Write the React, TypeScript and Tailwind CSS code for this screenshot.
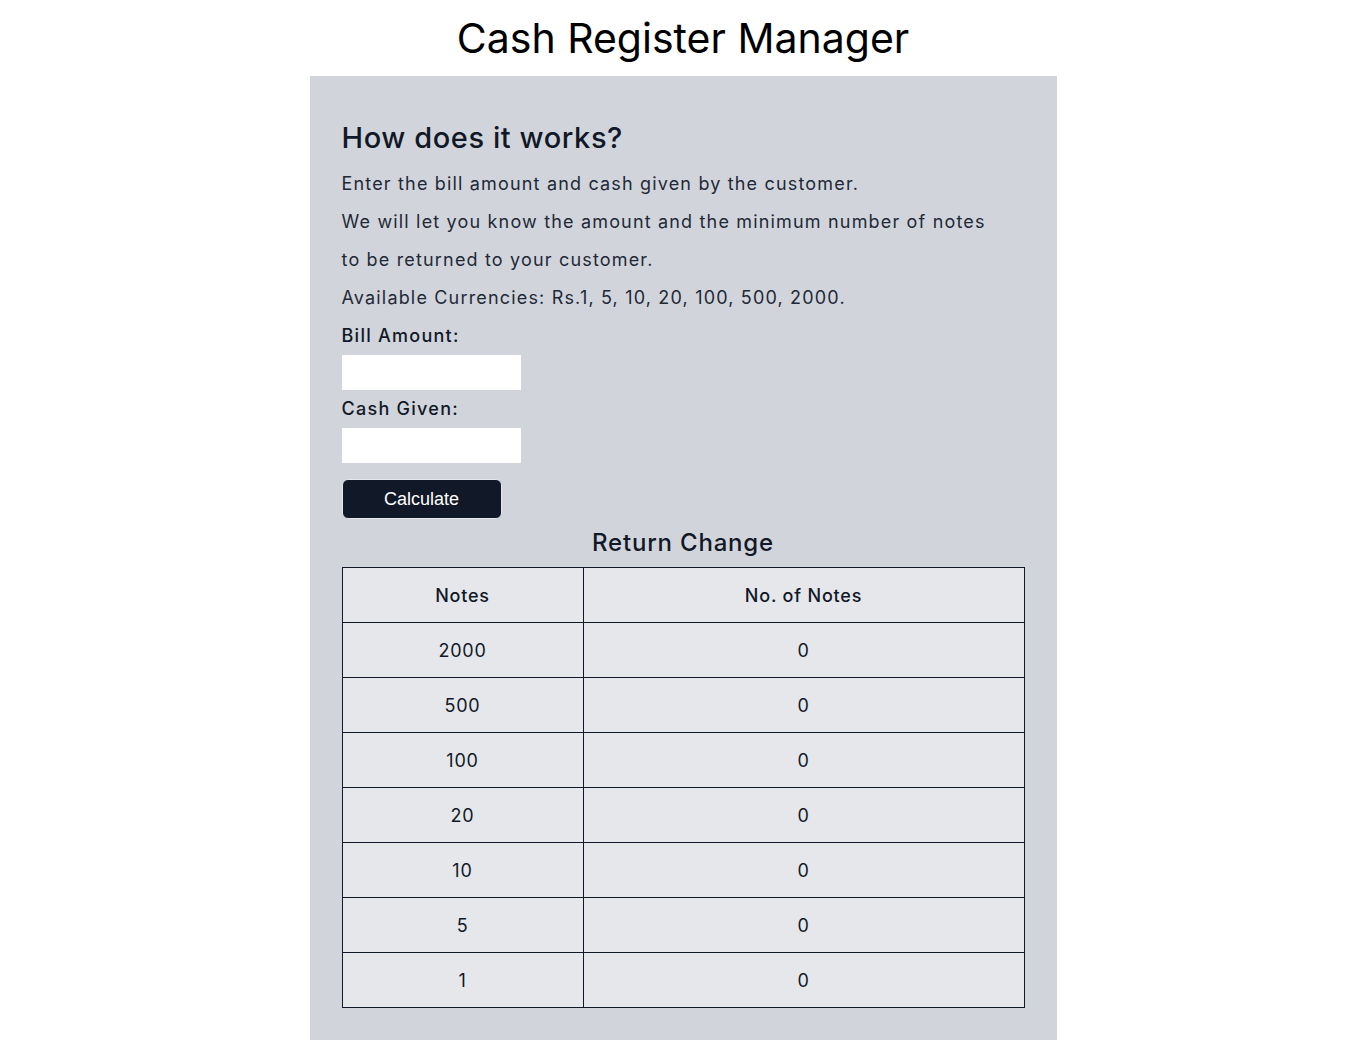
const NOTES = [2000, 500, 100, 20, 10, 5, 1];

export default function App() {
  return (
    <div className="min-h-screen bg-white text-[#111827] font-['Inter',sans-serif]">
      <h1 className="text-center text-[41px] leading-[76px] font-normal text-black">
        Cash Register Manager
      </h1>

      <main className="mx-auto w-[747px] bg-[#d1d5db] px-8 pt-[44px] pb-8 tracking-[0.05em]">
        <h2 className="text-[29px] leading-[36px] font-medium tracking-[0.02em]">How does it works?</h2>
        <div className="mt-[9px] text-[18px] leading-[38px] text-[#1f2937] tracking-[0.065em]">
          <p>Enter the bill amount and cash given by the customer.</p>
          <p>
            We will let you know the amount and the minimum number of notes
            <br />
            to be returned to your customer.
          </p>
          <p>Available Currencies: Rs.1, 5, 10, 20, 100, 500, 2000.</p>
        </div>

        <form className="flex flex-col items-start" onSubmit={(e) => e.preventDefault()}>
          <label htmlFor="bill" className="text-[18px] leading-[38px] font-medium tracking-[0.07em]">
            Bill Amount:
          </label>
          <input id="bill" type="number" className="h-[35px] w-[179px] bg-white outline-none" />
          <label htmlFor="cash" className="text-[18px] leading-[38px] font-medium tracking-[0.07em]">
            Cash Given:
          </label>
          <input id="cash" type="number" className="h-[35px] w-[179px] bg-white outline-none" />
          <button
            type="submit"
            className="mt-4 h-[40px] w-[160px] rounded-md border border-[#e5e7eb] bg-[#111827] font-['Liberation_Sans',Arial,sans-serif] text-[18px] tracking-normal text-white"
          >
            Calculate
          </button>
        </form>

        <h3 className="mt-2 text-center text-[24px] leading-[32px] font-medium">Return Change</h3>

        <table className="mt-2 w-full border-collapse bg-[#e5e7eb] text-center text-[18px]">
          <thead>
            <tr className="h-[55px]">
              <th className="w-[241px] border border-[#111827] font-medium">Notes</th>
              <th className="border border-[#111827] font-medium">No. of Notes</th>
            </tr>
          </thead>
          <tbody>
            {NOTES.map((n) => (
              <tr key={n} className="h-[55px]">
                <td className="border border-[#111827]">{n}</td>
                <td className="border border-[#111827]">0</td>
              </tr>
            ))}
          </tbody>
        </table>
      </main>
    </div>
  );
}
